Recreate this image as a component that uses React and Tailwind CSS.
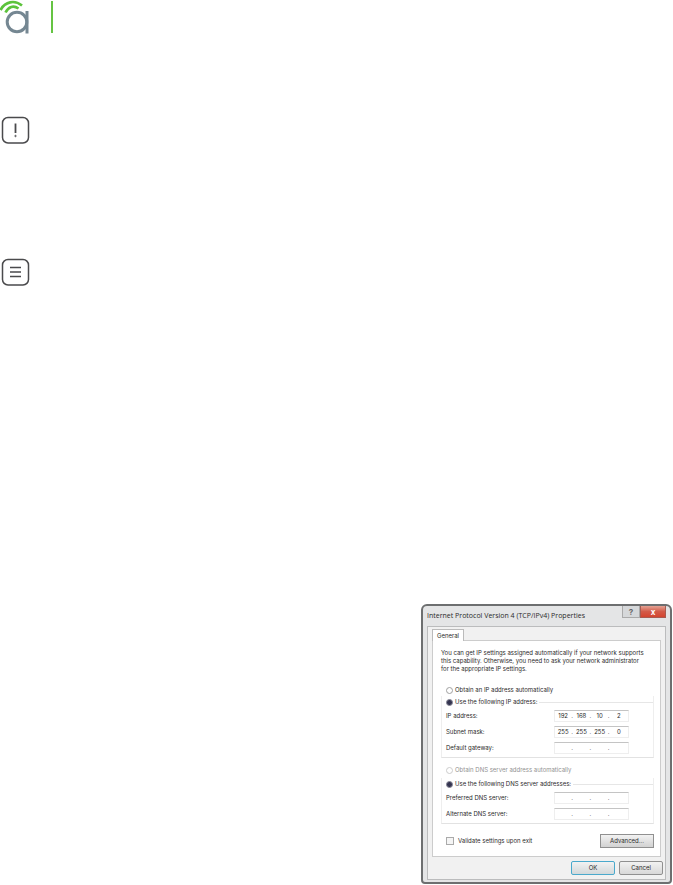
function Logo() {
  return (
    <svg viewBox="0 0 32 36" className="h-9 w-8" fill="none" role="img" aria-label="Logo">
      <path d="M0.5 10C5 1.5 14.5-0.5 22 5.5" stroke="#5cc33c" strokeWidth="2.7" />
      <path d="M5.5 12.5C8.5 6.5 13.5 5 18.5 8.5" stroke="#5cc33c" strokeWidth="2.7" />
      <circle cx="17" cy="22" r="9.8" stroke="#758792" strokeWidth="3" />
      <path d="M27 11V33.5" stroke="#758792" strokeWidth="3" />
    </svg>
  );
}

function NoteIcon({ label, children }) {
  return (
    <svg viewBox="0 0 30 30" className="block size-[30px]" fill="none" stroke="#4a4a4c" role="img" aria-label={label}>
      <rect x="2.5" y="1.5" width="26" height="25.5" rx="5.5" strokeWidth="1.5" />
      {children}
    </svg>
  );
}

function IpField({ label, name, values = ["", "", "", ""] }) {
  return (
    <div role="group" aria-label={label} className="flex h-4 items-center justify-between">
      <label htmlFor={`${name}-0`}>{label}</label>
      <div className="flex h-3 w-[75px] items-center border border-[#eeeeee] border-t-[#c4c4c4]">
        {values.map((value, i) => (
          <div key={i} className="flex flex-1 items-center">
            <input
              id={`${name}-${i}`}
              aria-label={`${label} ${i + 1}`}
              defaultValue={value}
              className="h-2 w-full min-w-0 flex-1 bg-transparent text-center outline-none"
            />
            {i < 3 && <span className="w-0.5">.</span>}
          </div>
        ))}
      </div>
    </div>
  );
}

function Radio({ name, label, checked, disabled }) {
  return (
    <label className={`flex h-3 items-center ${disabled ? "text-[#929292]" : ""}`}>
      <input
        type="radio"
        name={name}
        defaultChecked={checked}
        disabled={disabled}
        className="size-[7px] appearance-none rounded-full border border-[#a0a0a0] bg-white checked:border-[#8a8a98] checked:bg-[#343450] disabled:border-[#cccccc]"
      />
      <span className="px-0.5">{label}</span>
      {checked && <span className="h-px flex-1 bg-[#e6e6e6]" />}
    </label>
  );
}

function PropertiesDialog() {
  return (
    <section
      aria-label="Internet Protocol Version 4 Properties"
      className="w-[251px] rounded-t-md rounded-b-sm border-2 border-[#6d6f70] bg-[#e4e5e6] px-1 pb-0.5 font-[Inter,sans-serif] text-[6px] leading-2 whitespace-nowrap text-[#2a2a2a]"
    >
      <header className="flex h-5 items-start justify-between">
        <h1 className="pt-1.5 font-['Open_Sans',sans-serif] text-[7px] leading-2">Internet Protocol Version 4 (TCP/IPv4) Properties</h1>
        <div className="flex h-3 text-[8px] font-bold">
          <button type="button" aria-label="Help" className="w-[18px] border border-t-0 border-[#aaaaaa] bg-[#d6d8da] text-[#666666]">
            ?
          </button>
          <button
            type="button"
            aria-label="Close"
            className="w-[26px] border border-t-0 border-[#a75b51] bg-linear-to-b from-[#e4a294] via-[#d35b49] to-[#d4442f] text-white"
          >
            x
          </button>
        </div>
      </header>
      <div className="border border-[#bbbcbd] bg-[#f1f1f1] pt-0.5">
        <div role="tablist" className="flex px-1">
          <button type="button" role="tab" aria-selected="true" className="z-10 -mb-px h-3 w-8 border border-b-0 border-[#bbbbbb] bg-white">
            General
          </button>
        </div>
        <div className="mx-1 border border-[#cccccc] bg-white pt-2 pr-1.5 pb-2 pl-2">
          <p>
            You can get IP settings assigned automatically if your network supports
            <br />
            this capability. Otherwise, you need to ask your network administrator
            <br />
            for the appropriate IP settings.
          </p>
          <div className="mt-[11px] px-[5px]">
            <Radio name="ip" label="Obtain an IP address automatically" />
          </div>
          <fieldset className="border border-t-0 border-[#eeeeee] border-b-[#e2e2e2] pb-px pl-1">
            <Radio name="ip-manual" label="Use the following IP address:" checked />
            <div className="pr-6">
              <IpField label="IP address:" name="ip-address" values={["192", "168", "10", "2"]} />
              <IpField label="Subnet mask:" name="subnet" values={["255", "255", "255", "0"]} />
              <IpField label="Default gateway:" name="gateway" />
            </div>
          </fieldset>
          <div className="mt-1.5 px-[5px]">
            <Radio name="dns" label="Obtain DNS server address automatically" disabled />
          </div>
          <fieldset className="mt-0.5 border border-t-0 border-[#eeeeee] border-b-[#e2e2e2] pb-px pl-1">
            <Radio name="dns-manual" label="Use the following DNS server addresses:" checked />
            <div className="pr-6">
              <IpField label="Preferred DNS server:" name="preferred" />
              <IpField label="Alternate DNS server:" name="alternate" />
            </div>
          </fieldset>
          <div className="mt-2.5 flex items-center justify-between pl-[5px]">
            <label className="flex items-center gap-1">
              <input type="checkbox" className="size-2 appearance-none border border-[#aaaaaa] bg-[#f5f5f5]" />
              Validate settings upon exit
            </label>
            <button type="button" className="h-3.5 w-[54px] border border-[#909090] bg-linear-to-b from-[#f2f2f2] to-[#d2d2d2]">
              Advanced...
            </button>
          </div>
        </div>
        <footer className="flex justify-end gap-1 py-1 pr-0.5">
          <button type="button" className="h-3.5 w-11 rounded-xs border border-[#4aa9cc] bg-linear-to-b from-[#f2f2f2] to-[#d2d8da]">
            OK
          </button>
          <button type="button" className="h-3.5 w-11 rounded-xs border border-[#909090] bg-linear-to-b from-[#f2f2f2] to-[#d8d8d8]">
            Cancel
          </button>
        </footer>
      </div>
    </section>
  );
}

export default function App() {
  return (
    <main className="flex min-h-screen flex-col bg-white">
      <header className="flex h-9 items-start">
        <Logo />
        <div className="mt-px ml-[19px] h-8 w-0.5 bg-[#65c443]" />
      </header>
      <div className="mt-20">
        <NoteIcon label="Important">
          <path d="M15.5 7.5v9.5" strokeWidth="1.8" />
          <circle cx="15.5" cy="20" r="0.7" strokeWidth="1" />
        </NoteIcon>
      </div>
      <div className="mt-28">
        <NoteIcon label="Note">
          <path d="M10 9.5h11M10 14h11M10 18.5h11" strokeWidth="1.5" />
        </NoteIcon>
      </div>
      <div className="mt-auto flex justify-end pr-px pb-px">
        <PropertiesDialog />
      </div>
    </main>
  );
}
